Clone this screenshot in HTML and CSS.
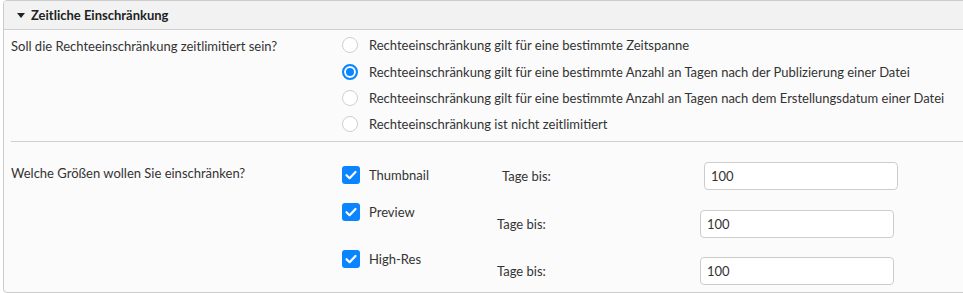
FILE: index.html
```html
<!DOCTYPE html>
<html lang="de">
<head>
<meta charset="utf-8">
<title>Zeitliche Einschränkung</title>
<link rel="stylesheet" href="styles.css">
</head>
<body>
<section class="panel">
  <header class="panel-head">
    <span class="caret"></span>
    <span class="panel-title">Zeitliche Einschränkung</span>
  </header>
  <div class="panel-body">
    <div class="field field-time">
      <div class="field-label">Soll die Rechteeinschränkung zeitlimitiert sein?</div>
      <div class="options">
        <label class="option"><span class="radio"></span><span>Rechteeinschränkung gilt für eine bestimmte Zeitspanne</span></label>
        <label class="option"><span class="radio checked"></span><span>Rechteeinschränkung gilt für eine bestimmte Anzahl an Tagen nach der Publizierung einer Datei</span></label>
        <label class="option"><span class="radio"></span><span>Rechteeinschränkung gilt für eine bestimmte Anzahl an Tagen nach dem Erstellungsdatum einer Datei</span></label>
        <label class="option"><span class="radio"></span><span>Rechteeinschränkung ist nicht zeitlimitiert</span></label>
      </div>
    </div>
    <div class="field field-sizes">
      <div class="field-label label-sizes">Welche Größen wollen Sie einschränken?</div>
      <div class="sizes">
        <div class="size-row first">
          <label class="check-item"><span class="checkbox"><svg viewBox="0 0 18 18" width="18" height="18"><path d="M4.5 9.2 L7.6 12.2 L13.5 6" fill="none" stroke="#fff" stroke-width="2.2" stroke-linecap="round" stroke-linejoin="round"/></svg></span><span>Thumbnail</span></label>
          <div class="days"><span class="days-label">Tage bis:</span><input class="days-input" type="text" value="100"></div>
        </div>
        <div class="size-row">
          <label class="check-item"><span class="checkbox"><svg viewBox="0 0 18 18" width="18" height="18"><path d="M4.5 9.2 L7.6 12.2 L13.5 6" fill="none" stroke="#fff" stroke-width="2.2" stroke-linecap="round" stroke-linejoin="round"/></svg></span><span>Preview</span></label>
          <div class="days"><span class="days-label">Tage bis:</span><input class="days-input" type="text" value="100"></div>
        </div>
        <div class="size-row last">
          <label class="check-item"><span class="checkbox"><svg viewBox="0 0 18 18" width="18" height="18"><path d="M4.5 9.2 L7.6 12.2 L13.5 6" fill="none" stroke="#fff" stroke-width="2.2" stroke-linecap="round" stroke-linejoin="round"/></svg></span><span>High-Res</span></label>
          <div class="days"><span class="days-label">Tage bis:</span><input class="days-input" type="text" value="100"></div>
        </div>
      </div>
    </div>
  </div>
</section>
</body>
</html>
```
FILE: styles.css
```css
html, body {
  margin: 0;
  padding: 0;
  background: #ffffff;
  overflow: hidden;
}
body {
  font-family: Lato, "Noto Sans", sans-serif;
  font-size: 13px;
  color: #333333;
}
.panel {
  margin: 0 -30px 0 3px;
  border: 1px solid #cccccc;
  border-radius: 4px;
  background: #fbfbfb;
  overflow: hidden;
}
.panel-head {
  height: 28px;
  display: flex;
  align-items: center;
  padding-left: 13px;
  background: #f2f2f2;
  border-bottom: 1px solid #d0d0d0;
}
.caret {
  width: 0;
  height: 0;
  border-left: 4.5px solid transparent;
  border-right: 4.5px solid transparent;
  border-top: 5px solid #222222;
  margin-right: 6px;
}
.panel-title {
  font-weight: 700;
  color: #222222;
}
.panel-body {
  padding-left: 7px;
}
.field {
  display: flex;
  align-items: flex-start;
}
.field-label {
  width: 331px;
  flex: none;
}
.field-time {
  padding-top: 2px;
  padding-bottom: 3px;
}
.field-time .field-label {
  line-height: 26.4px;
  padding-top: 1px;
}
.options {
  display: flex;
  flex-direction: column;
}
.option {
  height: 26.4px;
  display: flex;
  align-items: center;
  gap: 11px;
}
.radio {
  width: 16px;
  height: 16px;
  box-sizing: border-box;
  border: 1px solid #cfcfcf;
  border-radius: 50%;
  background: #ffffff;
  flex: none;
}
.radio.checked {
  border: 2px solid #0b84ff;
  box-shadow: inset 0 0 0 2px #ffffff, inset 0 0 0 6px #0b84ff;
}
.field-sizes {
  border-top: 1px solid #cfcfcf;
  padding-top: 20px;
  padding-bottom: 7px;
}
.label-sizes {
  line-height: 18px;
  margin-top: 2px;
}
.sizes {
  display: flex;
  flex-direction: column;
}
.size-row {
  display: flex;
  align-items: flex-start;
  margin-top: 13px;
}
.size-row.last {
  margin-top: 12px;
}
.size-row.first {
  margin-top: 0;
}
.check-item {
  width: 155px;
  flex: none;
  display: flex;
  align-items: center;
  gap: 9px;
  line-height: 18px;
}
.first .check-item {
  width: 160px;
  margin-top: 4px;
}
.checkbox {
  width: 18px;
  height: 18px;
  border-radius: 3px;
  background: #0b84ff;
  flex: none;
  display: block;
}
.checkbox svg {
  display: block;
}
.days {
  display: flex;
  align-items: center;
  margin-top: 7px;
}
.first .days {
  margin-top: 0;
}
.days-label {
  width: 203px;
  flex: none;
}
.first .days-label {
  width: 202px;
}
.days-input {
  width: 194px;
  height: 28px;
  box-sizing: border-box;
  border: 1px solid #cccccc;
  border-radius: 4px;
  background: #ffffff;
  padding: 0 0 0 6px;
  margin: 0;
  font-family: inherit;
  font-size: 13px;
  color: #333333;
}
```
